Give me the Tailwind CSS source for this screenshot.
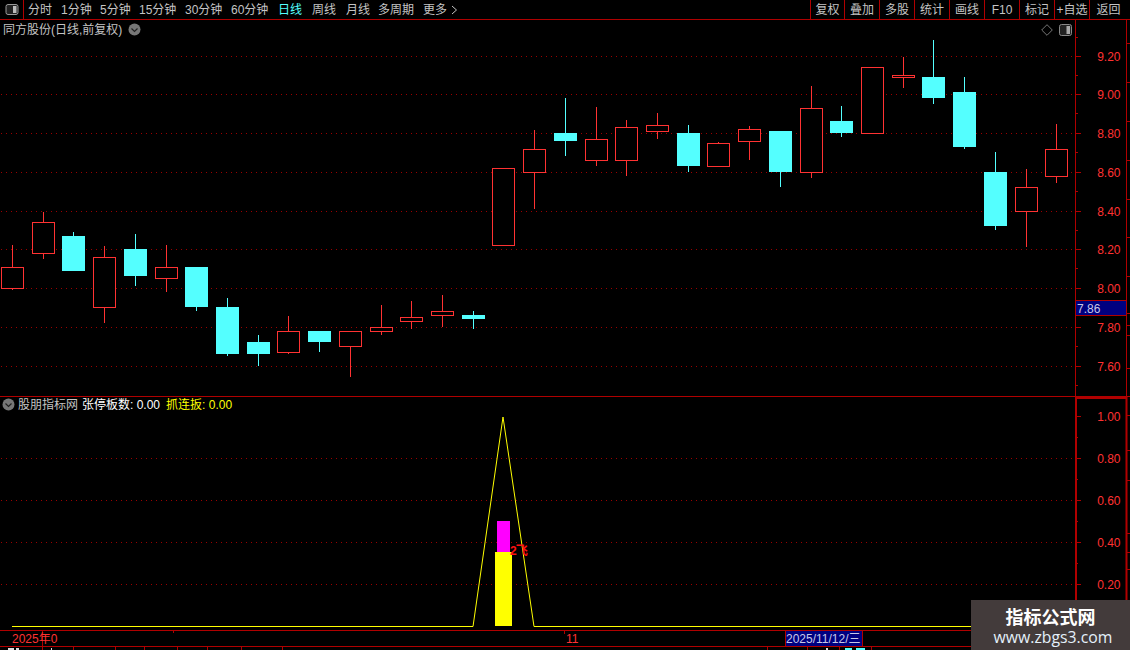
<!DOCTYPE html>
<html lang="zh-CN">
<head>
    <meta charset="UTF-8">
    <title>同方股份 日线</title>
    <script src="https://cdn.jsdelivr.net/npm/@tailwindcss/browser@4"></script>
</head>
<body class="bg-black overflow-hidden font-['Liberation_Sans','Noto_Sans_CJK_SC',sans-serif] text-[12px] leading-none text-[#c4c4c4]">
<div class="relative flex flex-col w-[1130px] h-[650px] bg-black overflow-hidden">

    <!-- toolbar -->
    <div class="flex h-[20px] shrink-0 items-center border-b border-[#b00000]">
        <div class="flex items-center justify-center w-[24px] h-full border-r border-[#b00000]">
            <svg width="14" height="11" viewBox="0 0 14 11">
                <rect x="1" y="0.5" width="12" height="10" rx="2" fill="#222" stroke="#999"/>
                <rect x="8" y="2" width="3.5" height="7" fill="#bbb"/>
            </svg>
        </div>
        <div class="flex items-center gap-[9px] pl-[4px] whitespace-nowrap">
            <span class="w-[24px]">分时</span>
            <span class="w-[30px]">1分钟</span>
            <span class="w-[30px]">5分钟</span>
            <span class="w-[37px]">15分钟</span>
            <span class="w-[37px]">30分钟</span>
            <span class="w-[37px]">60分钟</span>
            <span class="w-[24px] ml-[1px] text-[#54ffff]">日线</span>
            <span class="w-[24px] ml-[1px]">周线</span>
            <span class="w-[24px] ml-[1px]">月线</span>
            <span class="w-[36px] ml-[-1px]">多周期</span>
            <span class="flex items-center gap-[4px]">更多
                <svg width="7" height="10" viewBox="0 0 7 10"><polyline points="1,1 5.5,5 1,9" fill="none" stroke="#c4c4c4"/></svg>
            </span>
        </div>
        <div class="ml-auto flex h-full w-[320px] whitespace-nowrap">
            <span class="flex items-center justify-center w-[34px] border-l border-[#b00000]">复权</span>
            <span class="flex items-center justify-center w-[35px] border-l border-[#b00000]">叠加</span>
            <span class="flex items-center justify-center w-[35px] border-l border-[#b00000]">多股</span>
            <span class="flex items-center justify-center w-[35px] border-l border-[#b00000]">统计</span>
            <span class="flex items-center justify-center w-[35px] border-l border-[#b00000]">画线</span>
            <span class="flex items-center justify-center w-[35px] border-l border-[#b00000]">F10</span>
            <span class="flex items-center justify-center w-[35px] border-l border-[#b00000]">标记</span>
            <span class="flex items-center justify-center w-[35px] border-l border-[#b00000]">+自选</span>
            <span class="flex flex-1 items-center justify-center pr-[3px] border-l border-[#b00000]">返回</span>
        </div>
    </div>

    <!-- price pane -->
    <div class="relative flex h-[377px] shrink-0 border-b border-[#b00000]">
        <svg id="price" class="block w-[1075px] h-[376px]" viewBox="0 20 1075 376"></svg>
        <svg id="price-axis" class="block w-[55px] h-[376px]" viewBox="1075 20 55 376"></svg>
        <div class="absolute left-[3px] top-[3px] flex items-center gap-[6px] h-[13px] whitespace-nowrap">
            <span>同方股份(日线,前复权)</span>
            <svg width="13" height="13" viewBox="0 0 13 13">
                <circle cx="6.5" cy="6.5" r="6" fill="#777"/>
                <polyline points="3.5,5.5 6.5,8.5 9.5,5.5" fill="none" stroke="#222" stroke-width="1.2"/>
            </svg>
        </div>
        <div class="absolute left-[1041px] top-[4px] flex items-center gap-[6px]">
            <svg width="12" height="12" viewBox="0 0 12 12"><polygon points="6,0.7 11.3,6 6,11.3 0.7,6" fill="none" stroke="#777"/></svg>
            <svg width="13" height="12" viewBox="0 0 13 12">
                <rect x="0.5" y="0.5" width="12" height="11" rx="2" fill="#222" stroke="#888"/>
                <rect x="7.5" y="2" width="3.5" height="8" fill="#aaa"/>
            </svg>
        </div>
    </div>

    <!-- indicator pane -->
    <div class="relative flex h-[233px] shrink-0">
        <svg id="indicator" class="block w-[1075px] h-[233px]" viewBox="0 397 1075 233"></svg>
        <svg id="indicator-axis" class="block w-[55px] h-[233px]" viewBox="1075 397 55 233"></svg>
        <div class="absolute left-[2px] top-[1px] flex items-center h-[13px] whitespace-nowrap">
            <svg class="mr-[3px]" width="13" height="13" viewBox="0 0 13 13">
                <circle cx="6.5" cy="6.5" r="6" fill="#777"/>
                <polyline points="3.5,5.5 6.5,8.5 9.5,5.5" fill="none" stroke="#222" stroke-width="1.2"/>
            </svg>
            <span>股朋指标网</span>
            <span class="ml-[4px] text-white">张停板数: 0.00</span>
            <span class="ml-[6px] text-[#ffff00]">抓连扳: 0.00</span>
        </div>
    </div>

    <!-- time axis -->
    <svg id="time" class="block w-[1130px] h-[20px] shrink-0" viewBox="0 630 1130 20"></svg>

    <!-- watermark -->
    <div class="absolute right-0 bottom-0 flex flex-col items-center w-[159px] h-[50px] pt-[5px] bg-[#433b3b]">
        <span class="font-['Noto_Sans_CJK_SC',sans-serif] font-bold text-[18px] leading-[22px] text-white">指标公式网</span>
        <span class="pl-[5px] font-['Open_Sans',sans-serif] text-[15.8px] leading-[20px] text-[#e4f0fa]">www.zbgs3.com</span>
    </div>
</div>

<script>
    const NS = 'http://www.w3.org/2000/svg';
    const FRAME = '#b00000', RED = '#ff3232', CYAN = '#54ffff', DOT = '#9a0000';

    function add(svg, tag, attrs, text) {
        const el = document.createElementNS(NS, tag);
        for (const k in attrs) el.setAttribute(k, attrs[k]);
        if (text) el.textContent = text;
        document.getElementById(svg).appendChild(el);
    }
    function hline(svg, x1, x2, y, color) {
        add(svg, 'line', { x1, x2, y1: y + .5, y2: y + .5, stroke: color });
    }
    function vline(svg, x, y1, y2, color) {
        add(svg, 'line', { x1: x + .5, x2: x + .5, y1, y2, stroke: color });
    }
    function dots(svg, y) {
        add(svg, 'line', { x1: 1, x2: 1075, y1: y + .5, y2: y + .5, stroke: DOT, 'stroke-dasharray': '1 4' });
    }

    // left, body top, body bottom, wick top, wick bottom, r = hollow red / c = solid cyan
    const candles = [
        [1, 267, 289, 245, 290, 'r'], [32, 222, 254, 212, 259, 'r'], [62, 236, 271, 232, 271, 'c'],
        [93, 257, 308, 246, 323, 'r'], [124, 249, 276, 234, 286, 'c'], [155, 267, 279, 245, 292, 'r'],
        [185, 267, 307, 267, 311, 'c'], [216, 307, 354, 298, 356, 'c'], [247, 342, 354, 335, 366, 'c'],
        [277, 331, 353, 316, 354, 'r'], [308, 331, 342, 331, 352, 'c'], [339, 331, 347, 331, 377, 'r'],
        [370, 327, 332, 305, 335, 'r'], [400, 317, 322, 301, 329, 'r'], [431, 311, 316, 295, 327, 'r'],
        [462, 315, 319, 311, 329, 'c'], [492, 168, 246, 168, 246, 'r'], [523, 149, 173, 130, 209, 'r'],
        [554, 133, 141, 98, 156, 'c'], [585, 139, 161, 107, 166, 'r'], [615, 127, 161, 120, 176, 'r'],
        [646, 125, 132, 113, 139, 'r'], [677, 133, 166, 125, 172, 'c'], [707, 143, 167, 142, 167, 'r'],
        [738, 129, 142, 126, 160, 'r'], [769, 131, 172, 131, 187, 'c'], [800, 108, 173, 86, 178, 'r'],
        [830, 121, 133, 106, 137, 'c'], [861, 67, 134, 67, 134, 'r'], [892, 75, 78, 57, 88, 'r'],
        [922, 77, 98, 40, 104, 'c'], [953, 92, 147, 77, 149, 'c'], [984, 172, 226, 152, 230, 'c'],
        [1015, 187, 212, 169, 247, 'r'], [1045, 149, 177, 124, 183, 'r'],
    ];

    const priceTicks = [[56, '9.20'], [94, '9.00'], [133, '8.80'], [172, '8.60'], [211, '8.40'], [249, '8.20'], [288, '8.00'], [327, '7.80'], [366, '7.60']];
    priceTicks.forEach(([y]) => dots('price', y));

    candles.forEach(([x, top, bot, wt, wb, kind]) => {
        const color = kind === 'r' ? RED : CYAN;
        vline('price', x + 11, wt, wb, color);
        if (kind === 'r') {
            add('price', 'rect', { x: x + .5, y: top + .5, width: 22, height: bot - top - 1, fill: '#000', stroke: RED });
        } else {
            add('price', 'rect', { x, y: top, width: 23, height: bot - top, fill: CYAN });
        }
    });

    // price axis
    vline('price-axis', 1075, 20, 396, FRAME);
    vline('price-axis', 1126, 20, 396, FRAME);
    priceTicks.forEach(([y, label]) => {
        hline('price-axis', 1075, 1081, y, FRAME);
        hline('price-axis', 1075, 1078, y + 19, FRAME);
        add('price-axis', 'text', { x: 1120.5, y: y + 5, fill: RED, 'text-anchor': 'end', 'font-size': 12 }, label);
    });
    hline('price-axis', 1075, 1078, 37, FRAME);
    [43, 82, 121, 160, 199, 237, 276, 313, 325, 335, 368].forEach(y => hline('price-axis', 1127, 1130, y, FRAME));
    add('price-axis', 'rect', { x: 1075.5, y: 300.5, width: 51, height: 15, fill: '#000080', stroke: FRAME });
    add('price-axis', 'text', { x: 1077, y: 312.5, fill: '#c8c8e8', 'font-size': 12 }, '7.86');

    // indicator
    [458, 500, 542, 584].forEach(y => dots('indicator', y));
    add('indicator', 'rect', { x: 497, y: 521, width: 13, height: 31, fill: '#ff00ff' });
    add('indicator', 'rect', { x: 495, y: 552, width: 17, height: 74, fill: '#ffff00' });
    add('indicator', 'polyline', { points: '12,626.5 473,626.5 503,417 534,626.5 1075,626.5', fill: 'none', stroke: '#ffff00' });
    add('indicator', 'text', { x: 510, y: 555, fill: '#ff1010', 'font-size': 12, 'font-weight': 700, 'letter-spacing': -1 }, '2飞');

    const indTicks = [[416, '1.00'], [458, '0.80'], [500, '0.60'], [542, '0.40'], [584, '0.20']];
    add('indicator-axis', 'rect', { x: 1076, y: 398, width: 50.5, height: 240, fill: 'none', stroke: FRAME, 'stroke-width': 2 });
    indTicks.forEach(([y, label]) => {
        hline('indicator-axis', 1075, 1081, y, FRAME);
        hline('indicator-axis', 1075, 1078, y + 21, FRAME);
        add('indicator-axis', 'text', { x: 1120.5, y: y + 5, fill: RED, 'text-anchor': 'end', 'font-size': 12 }, label);
    });
    [415, 450, 480, 533, 552, 569].forEach(y => hline('indicator-axis', 1127, 1130, y, FRAME));

    // time axis
    hline('time', 0, 1130, 630, FRAME);
    hline('time', 0, 1130, 646, FRAME);
    vline('time', 42, 630, 650, FRAME);
    vline('time', 173, 630, 633, FRAME);
    vline('time', 564, 630, 634, FRAME);
    [73, 115, 144, 177, 207, 241, 282, 767, 807, 839, 871].forEach(x => vline('time', x, 646, 650, FRAME));
    add('time', 'text', { x: 12, y: 643, fill: RED, 'font-size': 12 }, '2025年0');
    add('time', 'text', { x: 566, y: 643, fill: RED, 'font-size': 12 }, '11');
    add('time', 'rect', { x: 785.5, y: 630.5, width: 77, height: 16, fill: '#000080', stroke: FRAME });
    add('time', 'text', { x: 786, y: 643, fill: '#c8c8e8', 'font-size': 12 }, '2025/11/12/三');

    // tops of the tab labels that the window cuts off
    [[8, 6, '#ddd'], [12, 1, '#ddd'], [16, 3, '#ddd'], [51, 1, '#ddd'], [826, 2, '#ddd'], [845, 7, CYAN], [856, 9, CYAN]].forEach(([x, w, fill]) => {
        add('time', 'rect', { x, y: 648, width: w, height: 2, fill });
    });
</script>
</body>
</html>
